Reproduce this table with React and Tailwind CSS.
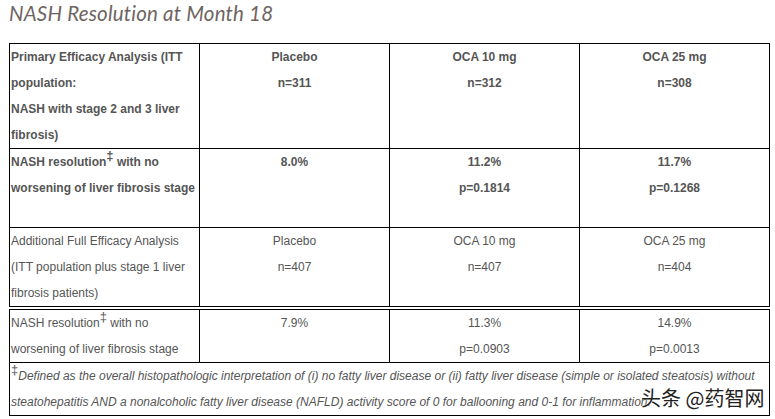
export default function App() {
  const cell = 'border border-black p-0 align-top';
  const first = `${cell} pl-[1px] text-left`;
  const mid = `${cell} text-center`;

  return (
    <div className="relative min-h-[419px] w-[775px] bg-white pl-[9px] font-['Liberation_Sans',Arial,sans-serif] text-[12px] leading-[26px] text-[#555]">
      <h1 className="font-['Lato',sans-serif] text-[20.5px] leading-[26px] font-normal tracking-[0.2px] text-[#6d6561] italic">
        NASH Resolution at Month 18
      </h1>

      <table className="mt-[17px] w-[760px] table-fixed border-collapse">
        <colgroup>
          <col className="w-[190px]" />
          <col className="w-[190px]" />
          <col className="w-[190px]" />
          <col className="w-[190px]" />
        </colgroup>
        <tbody>
          <tr className="font-bold">
            <td className={first}>
              Primary Efficacy Analysis (ITT population:
              <br />
              NASH with stage 2 and 3 liver fibrosis)
            </td>
            <td className={mid}>
              Placebo
              <br />
              n=311
            </td>
            <td className={mid}>
              OCA 10 mg
              <br />
              n=312
            </td>
            <td className={mid}>
              OCA 25 mg
              <br />
              n=308
            </td>
          </tr>
          <tr className="font-bold">
            <td className={`${first} pb-[26px]`}>
              NASH resolution<sup className="text-[13px] leading-none">‡</sup> with no worsening of liver fibrosis stage
            </td>
            <td className={`${mid} pb-[26px]`}>8.0%</td>
            <td className={`${mid} pb-[26px]`}>
              11.2%
              <br />
              p=0.1814
            </td>
            <td className={`${mid} pb-[26px]`}>
              11.7%
              <br />
              p=0.1268
            </td>
          </tr>
          <tr>
            <td className={first}>
              Additional Full Efficacy Analysis (ITT population plus stage 1 liver fibrosis patients)
            </td>
            <td className={mid}>
              Placebo
              <br />
              n=407
            </td>
            <td className={mid}>
              OCA 10 mg
              <br />
              n=407
            </td>
            <td className={mid}>
              OCA 25 mg
              <br />
              n=404
            </td>
          </tr>
        </tbody>
      </table>

      <table className="mt-[2px] w-[760px] table-fixed border-collapse">
        <colgroup>
          <col className="w-[190px]" />
          <col className="w-[190px]" />
          <col className="w-[190px]" />
          <col className="w-[190px]" />
        </colgroup>
        <tbody>
          <tr>
            <td className={first}>
              NASH resolution<sup className="text-[13px] leading-none">‡</sup> with no worsening of liver fibrosis stage
            </td>
            <td className={mid}>7.9%</td>
            <td className={mid}>
              11.3%
              <br />
              p=0.0903
            </td>
            <td className={mid}>
              14.9%
              <br />
              p=0.0013
            </td>
          </tr>
          <tr>
            <td colSpan={4} className={`${first} italic`}>
              <sup className="text-[13px] leading-none not-italic">‡</sup>Defined as the overall histopathologic
              interpretation of (i) no fatty liver disease or (ii) fatty liver disease (simple or isolated steatosis)
              without steatohepatitis AND a nonalcoholic fatty liver disease (NAFLD) activity score of 0 for
              ballooning and 0-1 for inflammation.
            </td>
          </tr>
        </tbody>
      </table>

      <div className="absolute top-[385px] left-[641px] font-['Noto_Sans_CJK_SC',sans-serif] text-[20px] leading-[26px] text-[#222] [text-shadow:0_0_2px_#fff]">
        头条 @药智网
      </div>
    </div>
  );
}
